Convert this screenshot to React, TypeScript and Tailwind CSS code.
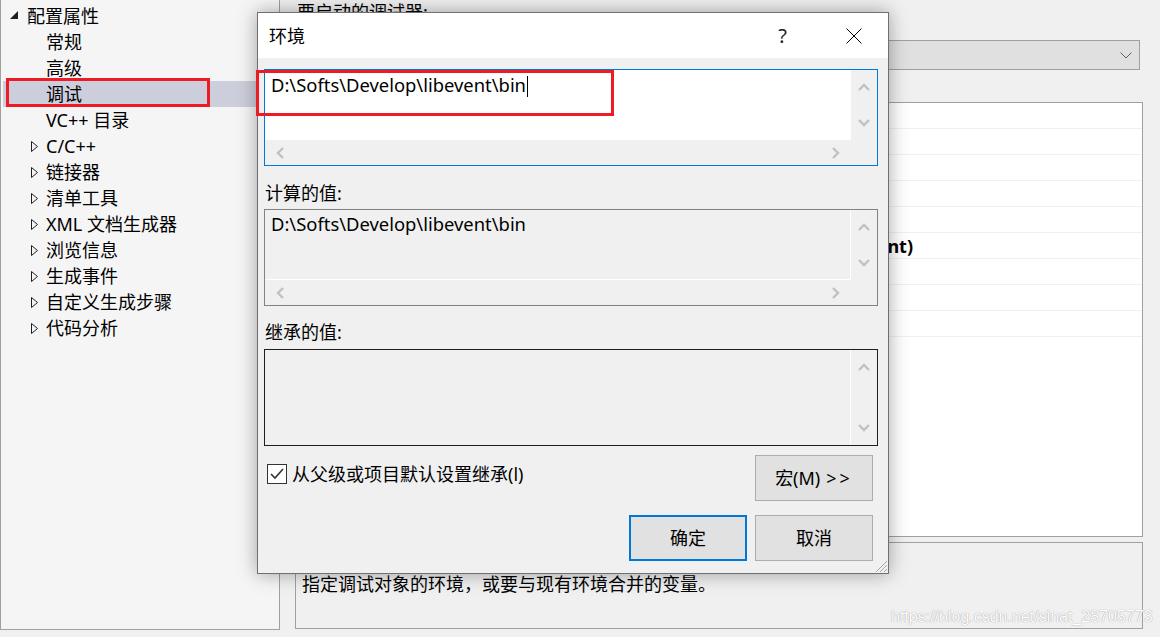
import React from 'react';

type TreeItem = {
  label: string;
  level: 0 | 1;
  arrow: 'open' | 'closed' | 'none';
  selected?: boolean;
};

const treeItems: TreeItem[] = [
  { label: '配置属性', level: 0, arrow: 'open' },
  { label: '常规', level: 1, arrow: 'none' },
  { label: '高级', level: 1, arrow: 'none' },
  { label: '调试', level: 1, arrow: 'none', selected: true },
  { label: 'VC++ 目录', level: 1, arrow: 'none' },
  { label: 'C/C++', level: 1, arrow: 'closed' },
  { label: '链接器', level: 1, arrow: 'closed' },
  { label: '清单工具', level: 1, arrow: 'closed' },
  { label: 'XML 文档生成器', level: 1, arrow: 'closed' },
  { label: '浏览信息', level: 1, arrow: 'closed' },
  { label: '生成事件', level: 1, arrow: 'closed' },
  { label: '自定义生成步骤', level: 1, arrow: 'closed' },
  { label: '代码分析', level: 1, arrow: 'closed' },
];

// 9 visible rows of the property grid; only the tail of the 6th value peeks out past the dialog
const gridRows = [0, 1, 2, 3, 4, 5, 6, 7, 8];

// small chevrons used by the scroll bars
const Chevron = ({ dir }: { dir: 'up' | 'down' | 'left' | 'right' }) => {
  const pts = {
    up: '1,8 6,3 11,8',
    down: '1,2 6,7 11,2',
    left: '8,1 3,6 8,11',
    right: '2,1 7,6 2,11',
  }[dir];
  const vertical = dir === 'up' || dir === 'down';
  return (
    <svg width={vertical ? 12 : 10} height={vertical ? 10 : 12} viewBox={vertical ? '0 0 12 10' : '0 0 10 12'}>
      <polyline points={pts} fill="none" stroke="#c1c1c1" strokeWidth="2.4" />
    </svg>
  );
};

const VScroll = () => (
  <div className="w-[26px] flex flex-col items-center justify-between py-[12px]">
    <Chevron dir="up" />
    <Chevron dir="down" />
  </div>
);

const HScroll = () => (
  <div className="flex-1 flex items-center justify-between pl-[10px] pr-[10px]">
    <Chevron dir="left" />
    <Chevron dir="right" />
  </div>
);

const TreeRow = ({ item }: { item: TreeItem }) => {
  const pad = item.level === 0 ? 'pl-[7px]' : item.arrow === 'none' ? 'pl-[43px]' : 'pl-[28px]';
  return (
    <div className={`h-[26px] ml-[2px] flex items-center ${pad} ${item.selected ? 'bg-[#cccedb]' : ''}`}>
      {item.arrow === 'open' && (
        <svg width="8" height="8" viewBox="0 0 8 8" className="mr-[9px] -mt-[3px]">
          <polygon points="8,0 8,8 0,8" fill="#1e1e1e" />
        </svg>
      )}
      {item.arrow === 'closed' && (
        <svg width="7" height="11" viewBox="0 0 7 11" className="mr-[8px]">
          <polygon points="0.5,0.5 6.5,5.5 0.5,10.5" fill="none" stroke="#1e1e1e" strokeWidth="1" />
        </svg>
      )}
      <span className="text-[18px] leading-[24px] whitespace-nowrap">{item.label}</span>
    </div>
  );
};

const Button = ({ children, primary }: { children: React.ReactNode; primary?: boolean }) => (
  <div
    className={`w-[118px] h-[46px] flex items-center justify-center bg-[#e1e1e1] text-[18px] ${
      primary ? 'border-2 border-[#0078d7]' : 'border border-[#adadad]'
    }`}
  >
    {children}
  </div>
);

export default function App() {
  return (
    <div className="relative w-[1160px] h-[637px] overflow-hidden bg-[#f0f0f0] flex text-black font-['Noto_Sans','Noto_Sans_CJK_SC',sans-serif]">
      {/* Left: property tree */}
      <div className="w-[280px] h-[630px] bg-[#f5f5f5] border-l border-r border-b border-[#a0a0a0] pt-[3px]">
        {treeItems.map((item) => (
          <TreeRow key={item.label} item={item} />
        ))}
      </div>

      {/* Right: debugging page behind the dialog */}
      <div className="flex-1 flex flex-col pl-[15px] pr-[17px]">
        <div className="h-[24px] pl-[2px] text-[18px] leading-[24px]">要启动的调试器:</div>
        <div className="mt-[16px] mr-[3px] h-[30px] bg-[#e0e0e0] border border-[#a0a0a0] flex items-center justify-end pr-[7px]">
          <svg width="12" height="7" viewBox="0 0 12 7">
            <polyline points="0.5,0.5 6,6 11.5,0.5" fill="none" stroke="#606060" strokeWidth="1" />
          </svg>
        </div>
        <div className="mt-[32px] h-[435px] bg-white border border-[#a0a0a0]">
          {gridRows.map((i) => (
            <div key={i} className="h-[26px] border-b border-[#f0f0f0] flex items-center">
              {i === 5 && (
                <div className="ml-[592px] w-[25px] overflow-hidden flex justify-end">
                  <span className="font-bold text-[18px] leading-[24px] whitespace-nowrap">nt)</span>
                </div>
              )}
            </div>
          ))}
        </div>
        <div className="mt-[5px] h-[87px] border border-[#a0a0a0] pl-[6px] pt-[29px]">
          <div className="text-[18px] leading-[24px]">指定调试对象的环境，或要与现有环境合并的变量。</div>
        </div>
      </div>

      {/* Red highlight box on the tree */}
      <div className="absolute left-[6px] top-[78px] w-[204px] h-[29px] border-[3px] border-[#ed1c24]" />

      {/* Environment dialog */}
      <div className="absolute left-[257px] top-[12px] w-[632px] h-[562px] bg-[#f0f0f0] border border-[#707070] shadow-[0_0_18px_rgba(0,0,0,0.35)] flex flex-col">
        <div className="h-[45px] bg-white flex items-center pl-[11px] pr-[26px]">
          <span className="text-[18px] leading-[24px] flex-1">环境</span>
          <span className="text-[20px] leading-[24px] text-[#202020] mr-[59px]">?</span>
          <svg width="16" height="16" viewBox="0 0 16 16">
            <line x1="0.5" y1="0.5" x2="15.5" y2="15.5" stroke="#000" strokeWidth="1" />
            <line x1="15.5" y1="0.5" x2="0.5" y2="15.5" stroke="#000" strokeWidth="1" />
          </svg>
        </div>

        <div className="flex-1 flex flex-col pl-[6px] pr-[10px] pt-[11px]">
          {/* editable box */}
          <div className="h-[97px] border border-[#0078d7] flex flex-col">
            <div className="h-[70px] flex">
              <div className="flex-1 bg-white pl-[6px] pt-[3px]">
                <span className="text-[18.4px] leading-[24px]">D:\Softs\Develop\libevent\bin</span>
                <span className="inline-block w-px h-[21px] bg-black align-middle ml-[1px] -mt-[2px]" />
              </div>
              <VScroll />
            </div>
            <div className="h-[25px] flex">
              <HScroll />
              <div className="w-[26px]" />
            </div>
          </div>

          <div className="mt-[15px] h-[24px] pl-px text-[18px] leading-[24px]">计算的值:</div>
          <div className="mt-[4px] h-[97px] border border-[#828282] flex flex-col">
            <div className="h-[70px] flex">
              <div className="flex-1 border-r border-b border-white pl-[6px] pt-[2px]">
                <span className="text-[18.4px] leading-[24px]">D:\Softs\Develop\libevent\bin</span>
              </div>
              <VScroll />
            </div>
            <div className="h-[25px] flex">
              <HScroll />
              <div className="w-[26px]" />
            </div>
          </div>

          <div className="mt-[14px] h-[24px] pl-px text-[18px] leading-[24px]">继承的值:</div>
          <div className="mt-[5px] h-[97px] border border-[#1e1e1e] flex">
            <div className="flex-1 border-r border-white" />
            <div className="w-[26px] flex flex-col items-center justify-between py-[12px]">
              <Chevron dir="up" />
              <Chevron dir="down" />
            </div>
          </div>

          <div className="mt-[9px] flex items-start">
            <div className="flex-1 flex items-center pl-[3px] pt-[7px]">
              <div className="w-[20px] h-[20px] bg-white border border-[#333] flex items-center justify-center">
                <svg width="16" height="14" viewBox="0 0 16 14">
                  <polyline points="2,7 6,11 14,2" fill="none" stroke="#333" strokeWidth="1.6" />
                </svg>
              </div>
              <span className="ml-[5px] text-[18px] leading-[24px]">从父级或项目默认设置继承(l)</span>
            </div>
            <div className="mr-[5px]">
              <Button>
                宏(M) <span className="ml-[6px] tracking-[3px]">&gt;&gt;</span>
              </Button>
            </div>
          </div>

          <div className="mt-[14px] mr-[5px] flex justify-end gap-[8px]">
            <Button primary>确定</Button>
            <Button>取消</Button>
          </div>
        </div>

        {/* resize grip */}
        <svg width="15" height="15" viewBox="0 0 15 15" className="absolute right-0 bottom-0">
          <line x1="14" y1="3" x2="3" y2="14" stroke="#a8a8a8" strokeWidth="1" />
          <line x1="14" y1="7" x2="7" y2="14" stroke="#a8a8a8" strokeWidth="1" />
          <line x1="14" y1="11" x2="11" y2="14" stroke="#a8a8a8" strokeWidth="1" />
        </svg>
      </div>

      {/* Red highlight box on the edit field */}
      <div className="absolute left-[256px] top-[70px] w-[358px] h-[46px] border-[3px] border-[#ed1c24]" />

      {/* watermark */}
      <div className="absolute left-[891px] top-[607px] text-[16px] leading-[20px] text-white font-['Liberation_Sans',sans-serif] [text-shadow:0_0_1px_#7a7a7a]">
        https://blog.csdn.net/sinat_28705773
      </div>
    </div>
  );
}
